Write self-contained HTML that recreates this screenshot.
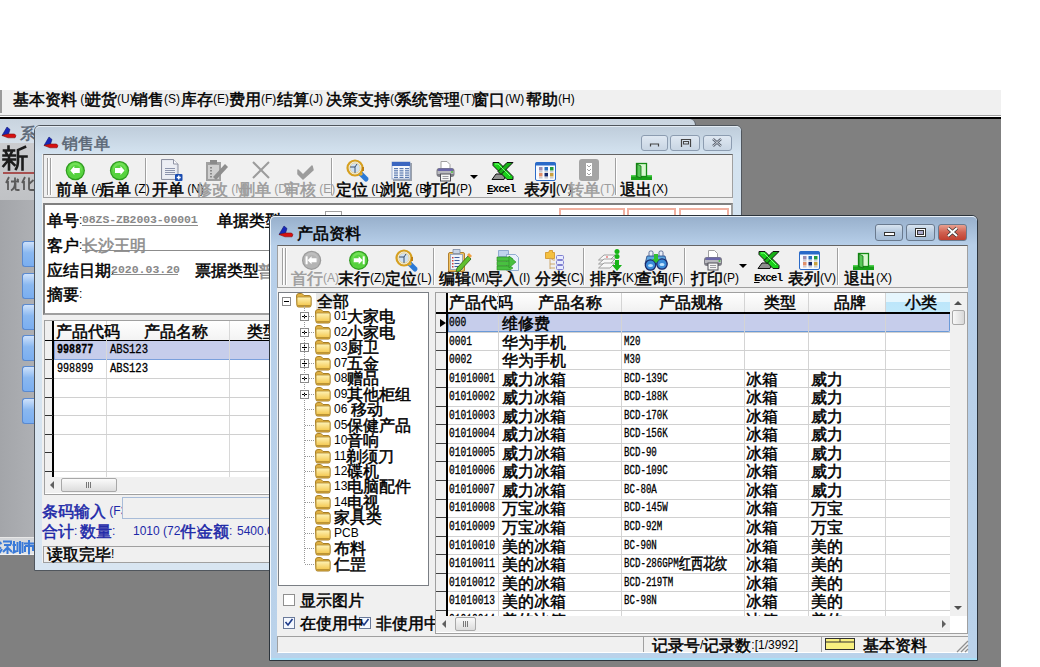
<!DOCTYPE html><html><head><meta charset="utf-8"><style>
*{box-sizing:border-box}
body{margin:0;width:1040px;height:667px;position:relative;overflow:hidden;background:#fff;font-family:"Liberation Sans",sans-serif;font-size:12px;color:#000}
div{position:absolute}
.t{white-space:nowrap;line-height:14px;height:14px}
b{font-weight:normal;font-size:16px;line-height:0;position:relative;top:2px;font-family:Liberation Sans,sans-serif;-webkit-text-stroke:0.5px}
.m{font-family:Liberation Mono,monospace;font-size:12px;transform-origin:0 50%;-webkit-text-stroke:0.3px}
.g{color:#8c8c8c}
.bl{color:#1c28a8}
</style></head><body><div style="left:0px;top:90px;width:1001px;height:25px;background:#f0f0f0"></div><div style="left:0px;top:90px;width:2px;height:23px;background:#9a9a9a"></div><div style="left:0px;top:115px;width:1001px;height:1px;background:#a0a0a0"></div><div style="left:0px;top:116px;width:1001px;height:1px;background:#fff"></div><div style="left:0px;top:117px;width:1001px;height:2px;background:#000"></div><div class="t " style="left:13px;top:92px;"><b>基本资料</b> (I)</div><div class="t " style="left:85px;top:92px;"><b>进货</b>(U)</div><div class="t " style="left:132px;top:92px;"><b>销售</b>(S)</div><div class="t " style="left:181px;top:92px;"><b>库存</b>(E)</div><div class="t " style="left:229px;top:92px;"><b>费用</b>(F)</div><div class="t " style="left:277px;top:92px;"><b>结算</b>(J)</div><div class="t " style="left:326px;top:92px;"><b>决策支持</b>(C)</div><div class="t " style="left:396px;top:92px;"><b>系统管理</b>(T)</div><div class="t " style="left:473px;top:92px;"><b>窗口</b>(W)</div><div class="t " style="left:526px;top:92px;"><b>帮助</b>(H)</div><div style="left:0px;top:119px;width:1001px;height:548px;background:#808080"></div><div style="left:0px;top:119px;width:696px;height:25px;background:linear-gradient(#c9d4df,#d6e0ea);border-radius:0 6px 0 0;border-right:1px solid #5a6068"></div><div style="left:0px;top:143px;width:40px;height:57px;background:linear-gradient(#cbcccf,#c0c2c5)"></div><div class="t " style="left:20px;top:126px;color:#5a6675"><b>系</b></div><svg width="1040" height="667" style="position:absolute;left:0;top:0"><defs><linearGradient id="fg" x1="0" y1="0" x2="0" y2="1"><stop offset="0" stop-color="#fff4b8"/><stop offset="1" stop-color="#f4c850"/></linearGradient></defs><g transform="translate(3,146)" stroke="#1c1c1c" stroke-width="2.6" fill="none" stroke-linecap="square"><path d="M5.5,0.5 v2.5 M1,4.5 h10 M3,6.5 l1,2 M8.5,6.5 l-1,2 M0.5,9.5 h11.5 M0.5,13.5 h11.5 M6,9.5 v14 M5.5,14 l-5,6 M6.5,14 l5,5"/><path d="M22,1 l-7,3 v10 q0,6 -2,9 M15,10.5 h8.5 M19.5,10.5 v13"/></g></svg><div style="left:3px;top:172px;width:38px;height:2px;background:#a85050"></div><svg width="1040" height="667" style="position:absolute;left:0;top:0"><g transform="translate(5,177)" stroke="#5a5a5a" stroke-width="1.8" fill="none"><path d="M4,0 l-3,6 M3,4 v9 M6,4.5 h8 M10,0.5 v5 q0,6 -4,8 M10.5,6 v6 q0,1 2,1 h2 M12,2 l1.5,1.5"/><path d="M20,0 l-3,6 M19,4 v9 M24,0.5 v11 q0,1.5 2,1.5 h3 M28.5,3 l-4.5,4"/></g></svg><div style="left:0px;top:200px;width:40px;height:337px;background:linear-gradient(90deg,#a3a5a9,#b0b2b6)"></div><div style="left:22px;top:241px;width:14px;height:26px;background:linear-gradient(#cfe2fb,#8ab8f0 45%,#7aaef0);border:1px solid #5a8ad0;border-right:none;border-radius:3px 0 0 3px"></div><div style="left:22px;top:273px;width:14px;height:26px;background:linear-gradient(#cfe2fb,#8ab8f0 45%,#7aaef0);border:1px solid #5a8ad0;border-right:none;border-radius:3px 0 0 3px"></div><div style="left:22px;top:304px;width:14px;height:26px;background:linear-gradient(#cfe2fb,#8ab8f0 45%,#7aaef0);border:1px solid #5a8ad0;border-right:none;border-radius:3px 0 0 3px"></div><div style="left:22px;top:335px;width:14px;height:26px;background:linear-gradient(#cfe2fb,#8ab8f0 45%,#7aaef0);border:1px solid #5a8ad0;border-right:none;border-radius:3px 0 0 3px"></div><div style="left:22px;top:366px;width:14px;height:26px;background:linear-gradient(#cfe2fb,#8ab8f0 45%,#7aaef0);border:1px solid #5a8ad0;border-right:none;border-radius:3px 0 0 3px"></div><div style="left:22px;top:398px;width:14px;height:26px;background:linear-gradient(#cfe2fb,#8ab8f0 45%,#7aaef0);border:1px solid #5a8ad0;border-right:none;border-radius:3px 0 0 3px"></div><div style="left:0px;top:537px;width:40px;height:1px;background:#e8e8e8"></div><div style="left:0px;top:538px;width:40px;height:17px;background:linear-gradient(#d4d6d9,#e4e6e8);border-bottom:1px solid #f4f4f4"></div><svg width="1040" height="667" style="position:absolute;left:0;top:0"><g transform="translate(-1,540)" stroke="#3a7ad8" stroke-width="2" fill="none"><path d="M0.5,2 l2,2 M0,7 l2,1.5 M0.5,13 l2.5,-4 M4,1.5 h8 v3 M5,5 h7 M8.5,5 v9 M8,8 l-4,4 M9,8 l4,4"/><path d="M15,1 v12 M13.5,5 h3.5 M13.5,13 l4,-2 M18.5,2 v10 M21,1 v13 M23.5,2 v11"/><path d="M30,0 v3 M25,3.5 h10 M26,6 h8 v5 M26,6 v6 M30,3.5 v11"/></g></svg><svg width="1040" height="667" style="position:absolute;left:0;top:0"><path d="M2,135.5 L7,127 L10,129.5 L8.5,134 Z" fill="#1828b8" stroke="#101870" stroke-width="0.6"/><path d="M2,135.5 L8.5,134 H14.5 Q17,135.5 15,137.8 H8 Z" fill="#d81010" stroke="#801010" stroke-width="0.6"/></svg><div style="left:34px;top:125px;width:708px;height:446px;background:#d3e1ee;border:1px solid #50565d;border-radius:6px 6px 0 0"></div><div style="left:35px;top:126px;width:706px;height:28px;background:linear-gradient(#bfcddb,#d4e3f0);border-radius:5px 5px 0 0;border-top:1px solid #e4ecf4"></div><div style="left:35px;top:154px;width:706px;height:416px;background:linear-gradient(#d4e3f0,#d8e5f1)"></div><div style="left:42px;top:154px;width:691px;height:409px;background:#f0f0f0"></div><div class="t " style="left:62px;top:136px;color:#5a6675"><b>销售单</b></div><div style="left:641px;top:135px;width:27px;height:16px;border:1px solid #8c9cb0;border-radius:3px;background:linear-gradient(#dfe8f2,#c8d5e3)"></div><div style="left:670px;top:135px;width:30px;height:16px;border:1px solid #8c9cb0;border-radius:3px;background:linear-gradient(#dfe8f2,#c8d5e3)"></div><div style="left:703px;top:135px;width:29px;height:16px;border:1px solid #8c9cb0;border-radius:3px;background:linear-gradient(#dfe8f2,#c8d5e3)"></div><svg width="1040" height="667" style="position:absolute;left:0;top:0"><path d="M650.5,146.5 v-2.5 h8 v2.5" stroke="#444" stroke-width="1.2" fill="none"/><path d="M681.5,147 v-7.5 h9 v7.5" fill="none" stroke="#444" stroke-width="1.2"/><rect x="683.5" y="141.5" width="5" height="2.5" fill="none" stroke="#444" stroke-width="1"/><path d="M713,139 l8,7 M721,139 l-8,7" stroke="#5a6270" stroke-width="2.4"/><path d="M713,139 l8,7 M721,139 l-8,7" stroke="#e8eef4" stroke-width="0.8"/></svg><div style="left:43px;top:154px;width:690px;height:44px;border:1px solid #a0a0a0;border-top-color:#646464;background:#f0f0f0"></div><div style="left:47px;top:158px;width:1px;height:37px;background:#a0a0a0"></div><div style="left:48px;top:158px;width:1px;height:37px;background:#fff"></div><div style="left:50px;top:158px;width:1px;height:37px;background:#a0a0a0"></div><div style="left:51px;top:158px;width:1px;height:37px;background:#fff"></div><div style="left:145px;top:158px;width:1px;height:37px;background:#a0a0a0"></div><div style="left:146px;top:158px;width:1px;height:37px;background:#fff"></div><div style="left:331px;top:158px;width:1px;height:37px;background:#a0a0a0"></div><div style="left:332px;top:158px;width:1px;height:37px;background:#fff"></div><div style="left:615px;top:158px;width:1px;height:37px;background:#a0a0a0"></div><div style="left:616px;top:158px;width:1px;height:37px;background:#fff"></div><div class="t " style="left:56px;top:182px;"><b>前单</b> (A)</div><div class="t " style="left:99px;top:182px;"><b>后单</b> (Z)</div><div class="t " style="left:152px;top:182px;"><b>开单</b> (N)</div><div class="t " style="left:196px;top:182px;color:#9c9c9c"><b>修改</b> (M)</div><div class="t " style="left:239px;top:182px;color:#9c9c9c"><b>删单</b> (D)</div><div class="t " style="left:284px;top:182px;color:#9c9c9c"><b>审核</b> (E)</div><div class="t " style="left:336px;top:182px;"><b>定位</b> (L)</div><div class="t " style="left:380px;top:182px;"><b>浏览</b> (B)</div><div class="t " style="left:424px;top:182px;"><b>打印</b>(P)</div><div class="t " style="left:524px;top:182px;"><b>表列</b>(V)</div><div class="t " style="left:568px;top:182px;color:#9c9c9c"><b>转单</b>(T)</div><div class="t " style="left:620px;top:182px;"><b>退出</b>(X)</div><div class="t" style="left:487px;top:182px;font-family:Liberation Mono,monospace;font-size:11px;font-weight:bold;letter-spacing:-1px"><u>E</u>xcel</div><svg width="1040" height="667" style="position:absolute;left:0;top:0"><circle cx="75.3" cy="170.6" r="9.6" fill="#2e9a1e"/><circle cx="75.3" cy="170.6" r="8.4" fill="#56d23e"/><circle cx="75.3" cy="169.1" r="6.5" fill="#8cf06e" opacity="0.5"/><circle cx="75.3" cy="170.6" r="5.6" fill="#56d23e"/><polygon points="70.3,170.6 74.3,166.1 74.3,168.1 79.8,168.1 79.8,173.1 74.3,173.1 74.3,175.1" fill="#fff"/><circle cx="119.5" cy="170.6" r="9.6" fill="#2e9a1e"/><circle cx="119.5" cy="170.6" r="8.4" fill="#56d23e"/><circle cx="119.5" cy="169.1" r="6.5" fill="#8cf06e" opacity="0.5"/><circle cx="119.5" cy="170.6" r="5.6" fill="#56d23e"/><polygon points="124.5,170.6 120.5,166.1 120.5,168.1 115.0,168.1 115.0,173.1 120.5,173.1 120.5,175.1" fill="#fff"/><path d="M161.5,159.5 h12 l4.5,4.5 v15.5 h-16.5 z" fill="#dfe2ea" stroke="#8c90a0" stroke-width="1"/><path d="M162.5,160.5 h10.5 l3.5,3.5 v14.5 h-14 z" fill="#eceef4"/><path d="M173.5,159.5 v4.5 h4.5" fill="#f8f8fc" stroke="#9094a4" stroke-width="1"/><rect x="165" y="168" width="10" height="1" fill="#8c94ac"/><rect x="165" y="170" width="10" height="1" fill="#8c94ac"/><rect x="165" y="172" width="10" height="1" fill="#8c94ac"/><rect x="165" y="174" width="10" height="1" fill="#8c94ac"/><rect x="175" y="174" width="7.5" height="7" rx="1" fill="#1a4cb0"/><path d="M178.75,175.5 v4 M176.75,177.5 h4" stroke="#fff" stroke-width="1.4"/><rect x="206" y="162" width="15" height="19" fill="#a0a0a0"/><rect x="208" y="165" width="11" height="14" fill="#d0d0d0"/><rect x="210" y="160" width="7" height="4" fill="#8a8a8a"/><path d="M213,177 l12,-13 l3,3 l-12,13 z" fill="#8e8e8e"/><rect x="210" y="167" width="2" height="1.5" fill="#8a8a8a"/><rect x="210" y="170" width="2" height="1.5" fill="#8a8a8a"/><rect x="210" y="173" width="2" height="1.5" fill="#8a8a8a"/><rect x="210" y="176" width="2" height="1.5" fill="#8a8a8a"/><path d="M253,162 L269,178 M269,162 L253,178" stroke="#9c9c9c" stroke-width="2"/><path d="M298,170 l5,5 l9,-9 l1,4 l-10,9 l-5,-5 z" fill="#9c9c9c" stroke="#9c9c9c" stroke-width="1.5" stroke-linejoin="round"/><line x1="360" y1="173" x2="366" y2="179" stroke="#2b7ad6" stroke-width="5" stroke-linecap="round"/><line x1="360" y1="173" x2="362" y2="175" stroke="#e0b040" stroke-width="3"/><circle cx="355" cy="168" r="7.5" fill="#e8eef6" stroke="#d6a020" stroke-width="2.2"/><circle cx="355" cy="168" r="5.2" fill="#cfe0f0" stroke="#f2d890" stroke-width="1"/><path d="M350,167 h5 M355,167 l2,-3 M355,167 v6" stroke="#3a4e6a" stroke-width="1"/><rect x="362" y="167" width="2" height="4" fill="#c08010"/><rect x="393" y="163" width="19" height="18" fill="#9aa0aa"/><rect x="392" y="162" width="18" height="17" fill="#f4f7fc" stroke="#8aa0c8" stroke-width="0.8"/><rect x="392" y="162" width="18" height="4" fill="#3a66c0"/><rect x="394.0" y="168.0" width="4" height="1.2" fill="#5a7ab0"/><rect x="399.5" y="168.0" width="4" height="1.2" fill="#5a7ab0"/><rect x="405.0" y="168.0" width="4" height="1.2" fill="#5a7ab0"/><rect x="394.0" y="170.2" width="4" height="1.2" fill="#5a7ab0"/><rect x="399.5" y="170.2" width="4" height="1.2" fill="#5a7ab0"/><rect x="405.0" y="170.2" width="4" height="1.2" fill="#5a7ab0"/><rect x="394.0" y="172.4" width="4" height="1.2" fill="#5a7ab0"/><rect x="399.5" y="172.4" width="4" height="1.2" fill="#5a7ab0"/><rect x="405.0" y="172.4" width="4" height="1.2" fill="#5a7ab0"/><rect x="394.0" y="174.6" width="4" height="1.2" fill="#5a7ab0"/><rect x="399.5" y="174.6" width="4" height="1.2" fill="#5a7ab0"/><rect x="405.0" y="174.6" width="4" height="1.2" fill="#5a7ab0"/><rect x="394.0" y="176.8" width="4" height="1.2" fill="#5a7ab0"/><rect x="399.5" y="176.8" width="4" height="1.2" fill="#5a7ab0"/><rect x="405.0" y="176.8" width="4" height="1.2" fill="#5a7ab0"/><path d="M441,161.5 h6 l3,3 v5 h-9 z" fill="#fff" stroke="#a0a0a0" stroke-width="1"/><rect x="436.5" y="168" width="18" height="9" rx="3" fill="#7c7c84"/><rect x="438" y="168.5" width="15" height="2.5" rx="1" fill="#6a66a8"/><rect x="437.5" y="171" width="16" height="3" fill="#b8b8be"/><rect x="440.5" y="174" width="10" height="7" fill="#f4f4f4" stroke="#505058" stroke-width="1"/><path d="M442.5,176.5 h6 M442.5,178.5 h6" stroke="#9a9aa0" stroke-width="1"/><circle cx="452" cy="172" r="1" fill="#50c040"/><polygon points="470,175 478,175 474,179" fill="#000"/><polygon points="492,179.5 496,174 506,174 504,179.5" fill="#909090" stroke="#101010" stroke-width="1"/><path d="M493,162.5 h6 l14,14 v3 h-6 l-14,-14 z" fill="#19d019" stroke="#101010" stroke-width="1"/><path d="M513,162.5 h-6 l-9,9 l3,3 z" fill="#17b017" stroke="#101010" stroke-width="1"/><path d="M495,164 h3 l12,12" stroke="#7cff7c" stroke-width="1" fill="none"/><rect x="535.5" y="162.5" width="20" height="18" rx="1.5" fill="#f8fbff" stroke="#2a6ac8" stroke-width="1"/><rect x="535.5" y="162.5" width="20" height="3" fill="#2a6ac8"/><rect x="539.0" y="167" width="3.5" height="3.5" fill="#9c8cb0"/><rect x="539.0" y="171.5" width="3.5" height="0.8" fill="#a0a0a0"/><rect x="544.5" y="167" width="3.5" height="3.5" fill="#2a70c0"/><rect x="544.5" y="171.5" width="3.5" height="0.8" fill="#a0a0a0"/><rect x="550.0" y="167" width="3.5" height="3.5" fill="#239a3a"/><rect x="550.0" y="171.5" width="3.5" height="0.8" fill="#a0a0a0"/><rect x="539.0" y="173" width="3.5" height="3.5" fill="#e0906a"/><rect x="539.0" y="177.5" width="3.5" height="0.8" fill="#a0a0a0"/><rect x="544.5" y="173" width="3.5" height="3.5" fill="#14286a"/><rect x="544.5" y="177.5" width="3.5" height="0.8" fill="#a0a0a0"/><rect x="550.0" y="173" width="3.5" height="3.5" fill="#c8a040"/><rect x="550.0" y="177.5" width="3.5" height="0.8" fill="#a0a0a0"/><rect x="579" y="159" width="20" height="22" rx="3" fill="#a4a4a4"/><path d="M586,163 h6 v13 h-6 z" fill="#fff"/><path d="M587,165 l2,2 l2,-2 M587,169 l2,2 l2,-2 M587,173 l2,2 l2,-2" stroke="#a4a4a4" stroke-width="1" fill="none"/><rect x="631" y="175" width="21" height="5" fill="#18a018"/><rect x="631" y="175" width="21" height="1.5" fill="#50d050"/><rect x="636.5" y="163.5" width="10" height="13" fill="#d8f8d0" stroke="#138a13" stroke-width="1.3"/><path d="M637,164 l4,2 v12 l-4,-1.5 z" fill="#58c858" stroke="#107010" stroke-width="0.8"/><path d="M44,145.5 L49,137 L52,139.5 L50.5,144 Z" fill="#1828b8" stroke="#101870" stroke-width="0.6"/><path d="M44,145.5 L50.5,144 H56.5 Q59,145.5 57,147.8 H50 Z" fill="#d81010" stroke="#801010" stroke-width="0.6"/></svg><div style="left:43px;top:203px;width:690px;height:112px;border:2px solid #808080;border-right-color:#a0a0a0;border-bottom-color:#a0a0a0;background:#fff"></div><div class="t " style="left:47px;top:213px;"><b>单号</b>:</div><div class="t " style="left:82px;top:213px;font-family:Liberation Mono,monospace;font-size:11.5px;color:#888;letter-spacing:-0.1px;font-weight:bold">08ZS-ZB2003-00001</div><div style="left:82px;top:225px;width:116px;height:1px;background:#8c8c8c"></div><div class="t " style="left:217px;top:213px;"><b>单据类型</b>:</div><div style="left:559px;top:208px;width:66px;height:8px;border:2px solid #f0b0a0;border-bottom:none"></div><div style="left:627px;top:208px;width:49px;height:8px;border:2px solid #f0b0a0;border-bottom:none"></div><div style="left:679px;top:208px;width:50px;height:8px;border:2px solid #f0b0a0;border-bottom:none"></div><div style="left:325px;top:211px;width:17px;height:6px;background:#fff;border:1px solid #a0a0a0"></div><div class="t " style="left:47px;top:238px;"><b>客户</b>:</div><div class="t " style="left:82px;top:238px;color:#8c8c8c"><b>长沙王明</b></div><div style="left:82px;top:250px;width:200px;height:1px;background:#8c8c8c"></div><div class="t " style="left:47px;top:263px;"><b>应结日期</b>:</div><div class="t " style="left:111px;top:263px;font-family:Liberation Mono,monospace;font-size:11.5px;color:#888;font-weight:bold">2020.03.20</div><div style="left:111px;top:274px;width:67px;height:1px;background:#8c8c8c"></div><div class="t " style="left:195px;top:263px;"><b>票据类型</b>:</div><div class="t " style="left:258px;top:264px;color:#8c8c8c"><b>普</b></div><div class="t " style="left:47px;top:287px;"><b>摘要</b>:</div><div style="left:44px;top:320px;width:689px;height:175px;background:#fff;border:1px solid #a0a0a0"></div><div style="left:45px;top:321px;width:8px;height:156px;background:#f0f0f0"></div><div style="left:52px;top:321px;width:2px;height:156px;background:#000"></div><div style="left:54px;top:321px;width:679px;height:20px;background:linear-gradient(#ffffff,#f2f2f2)"></div><div style="left:45px;top:340px;width:688px;height:1px;background:#000"></div><div style="left:54px;top:341px;width:679px;height:19px;background:#c6cdeb;border-bottom:1px solid #7aa0dc;border-left:1px solid #7aa0dc"></div><div style="left:106px;top:321px;width:1px;height:156px;background:#d8d8d8"></div><div style="left:229px;top:321px;width:1px;height:156px;background:#d8d8d8"></div><div style="left:54px;top:378px;width:679px;height:1px;background:#d0d0d0"></div><div style="left:54px;top:397px;width:679px;height:1px;background:#d0d0d0"></div><div style="left:54px;top:415px;width:679px;height:1px;background:#d0d0d0"></div><div style="left:54px;top:434px;width:679px;height:1px;background:#d0d0d0"></div><div style="left:54px;top:471px;width:679px;height:1px;background:#d0d0d0"></div><div style="left:45px;top:359px;width:8px;height:1px;background:#303030"></div><div style="left:45px;top:378px;width:8px;height:1px;background:#303030"></div><div style="left:45px;top:397px;width:8px;height:1px;background:#303030"></div><div style="left:45px;top:415px;width:8px;height:1px;background:#303030"></div><div style="left:45px;top:434px;width:8px;height:1px;background:#303030"></div><div style="left:45px;top:452px;width:8px;height:1px;background:#303030"></div><div style="left:45px;top:471px;width:8px;height:1px;background:#303030"></div><div class="t " style="left:56px;top:324px;"><b>产品代码</b></div><div class="t " style="left:144px;top:324px;"><b>产品名称</b></div><div class="t " style="left:247px;top:324px;"><b>类型</b></div><div class="t m" style="left:57px;top:343px;font-weight:bold;transform:scaleX(0.84)">998877</div><div class="t m" style="left:110px;top:343px;transform:scaleX(0.88)">ABS123</div><div class="t m" style="left:57px;top:362px;transform:scaleX(0.84)">998899</div><div class="t m" style="left:110px;top:362px;transform:scaleX(0.88)">ABS123</div><div style="left:45px;top:477px;width:688px;height:16px;background:#f0f0f0"></div><div style="left:61px;top:478px;width:56px;height:14px;border:1px solid #a8a8a8;border-radius:2px;background:linear-gradient(#fafafa,#dcdcdc)"></div><svg width="1040" height="667" style="position:absolute;left:0;top:0"><polygon points="50,485 54,481 54,489" fill="#606060"/><path d="M86.5,482 v6 M88.5,482 v6 M90.5,482 v6" stroke="#777" stroke-width="1"/></svg><div class="t " style="left:42px;top:504px;color:#1c28a8"><b>条码输入</b> (F3):</div><div style="left:122px;top:497px;width:611px;height:22px;border:1px solid #a8bcd8;background:#f0f0f0"></div><div class="t " style="left:42px;top:524px;color:#1c28a8"><b>合计</b>:</div><div class="t " style="left:80px;top:524px;color:#1c28a8"><b>数量</b>:</div><div class="t " style="left:133px;top:524px;color:#1c28a8">1010 (72<b>件</b>)</div><div class="t " style="left:197px;top:524px;color:#1c28a8"><b>金额</b>:</div><div class="t " style="left:237px;top:524px;color:#1c28a8">5400.0</div><div style="left:43px;top:546px;width:690px;height:17px;border:1px solid #a0a0a0;background:#f0f0f0"></div><div class="t " style="left:47px;top:547px;"><b>读取完毕</b>!</div><div style="left:269px;top:215px;width:709px;height:446px;background:#b9d1ea;border:1px solid #2c343c;border-radius:6px 6px 0 0"></div><div style="left:270px;top:216px;width:707px;height:29px;background:linear-gradient(#98b0cc,#b7cfe9);border-radius:5px 5px 0 0;border-top:1px solid #e8f0f8;border-left:1px solid #e8f0f8"></div><div style="left:270px;top:245px;width:707px;height:415px;background:linear-gradient(#b7cfe9,#bad2ea);border-left:1px solid #f0f6fc"></div><div style="left:271px;top:658px;width:706px;height:2px;background:#a8e0f8"></div><div style="left:277px;top:245px;width:691px;height:407px;background:#f0f0f0"></div><div class="t " style="left:297px;top:226px;"><b>产品资料</b></div><div style="left:875px;top:224px;width:28px;height:17px;border:1px solid #6a7a8e;border-radius:3px;background:linear-gradient(#d8e4f0,#b4c8de 50%,#a4bcd6)"></div><div style="left:906px;top:224px;width:29px;height:17px;border:1px solid #6a7a8e;border-radius:3px;background:linear-gradient(#d8e4f0,#b4c8de 50%,#a4bcd6)"></div><div style="left:938px;top:224px;width:29px;height:17px;border:1px solid #6a7a8e;border-radius:3px;background:linear-gradient(#e8a090,#d06050 50%,#c04030)"></div><svg width="1040" height="667" style="position:absolute;left:0;top:0"><rect x="884.5" y="232.5" width="10" height="3" fill="#fff" stroke="#333" stroke-width="1"/><rect x="915.5" y="228.5" width="10" height="8" fill="#fff" stroke="#333" stroke-width="1"/><rect x="917.5" y="230.5" width="6" height="4" fill="#aac" stroke="#333" stroke-width="1"/><path d="M948,228 l9,8 M957,228 l-9,8" stroke="#333" stroke-width="3.4"/><path d="M948,228 l9,8 M957,228 l-9,8" stroke="#fff" stroke-width="2"/></svg><div style="left:277px;top:245px;width:691px;height:43px;border:1px solid #a0a0a0;border-top-color:#646464;background:#f0f0f0"></div><div style="left:282px;top:248px;width:1px;height:37px;background:#a0a0a0"></div><div style="left:283px;top:248px;width:1px;height:37px;background:#fff"></div><div style="left:285px;top:248px;width:1px;height:37px;background:#a0a0a0"></div><div style="left:286px;top:248px;width:1px;height:37px;background:#fff"></div><div style="left:433px;top:248px;width:1px;height:37px;background:#a0a0a0"></div><div style="left:434px;top:248px;width:1px;height:37px;background:#fff"></div><div style="left:583px;top:248px;width:1px;height:37px;background:#a0a0a0"></div><div style="left:584px;top:248px;width:1px;height:37px;background:#fff"></div><div style="left:684px;top:248px;width:1px;height:37px;background:#a0a0a0"></div><div style="left:685px;top:248px;width:1px;height:37px;background:#fff"></div><div style="left:837px;top:248px;width:1px;height:37px;background:#a0a0a0"></div><div style="left:838px;top:248px;width:1px;height:37px;background:#fff"></div><div class="t " style="left:291px;top:271px;color:#9c9c9c"><b>首行</b>(A)</div><div class="t " style="left:338px;top:271px;"><b>末行</b>(Z)</div><div class="t " style="left:385px;top:271px;"><b>定位</b>(L)</div><div class="t " style="left:439px;top:271px;"><b>编辑</b>(M)</div><div class="t " style="left:487px;top:271px;"><b>导入</b>(I)</div><div class="t " style="left:535px;top:271px;"><b>分类</b>(C)</div><div class="t " style="left:590px;top:271px;"><b>排序</b>(K)</div><div class="t " style="left:636px;top:271px;"><b>查询</b>(F)</div><div class="t " style="left:691px;top:271px;"><b>打印</b>(P)</div><div class="t " style="left:788px;top:271px;"><b>表列</b>(V)</div><div class="t " style="left:844px;top:271px;"><b>退出</b>(X)</div><div class="t" style="left:754px;top:271px;font-family:Liberation Mono,monospace;font-size:11px;font-weight:bold;letter-spacing:-1px"><u>E</u>xcel</div><svg width="1040" height="667" style="position:absolute;left:0;top:0"><circle cx="311.6" cy="260.3" r="9.6" fill="#9a9a9a"/><circle cx="311.6" cy="260.3" r="8.4" fill="#b4b4b4"/><circle cx="311.6" cy="258.8" r="6.5" fill="#c8c8c8" opacity="0.5"/><circle cx="311.6" cy="260.3" r="5.6" fill="#b4b4b4"/><rect x="305.6" y="256.3" width="2" height="8" fill="#fff"/><polygon points="307.6,260.3 311.6,256.3 311.6,258.3 316.6,258.3 316.6,262.3 311.6,262.3 311.6,264.3" fill="#fff"/><circle cx="358.7" cy="260.3" r="9.6" fill="#2e9a1e"/><circle cx="358.7" cy="260.3" r="8.4" fill="#56d23e"/><circle cx="358.7" cy="258.8" r="6.5" fill="#8cf06e" opacity="0.5"/><circle cx="358.7" cy="260.3" r="5.6" fill="#56d23e"/><rect x="362.7" y="256.3" width="2" height="8" fill="#fff"/><polygon points="362.7,260.3 358.7,256.3 358.7,258.3 353.7,258.3 353.7,262.3 358.7,262.3 358.7,264.3" fill="#fff"/><line x1="409" y1="263" x2="415" y2="269" stroke="#2b7ad6" stroke-width="5" stroke-linecap="round"/><line x1="409" y1="263" x2="411" y2="265" stroke="#e0b040" stroke-width="3"/><circle cx="404" cy="258" r="7.5" fill="#e8eef6" stroke="#d6a020" stroke-width="2.2"/><circle cx="404" cy="258" r="5.2" fill="#cfe0f0" stroke="#f2d890" stroke-width="1"/><path d="M399,257 h5 M404,257 l2,-3 M404,257 v6" stroke="#3a4e6a" stroke-width="1"/><rect x="411" y="257" width="2" height="4" fill="#c08010"/><rect x="448.5" y="252.5" width="16" height="19" rx="1.5" fill="#f0c060" stroke="#b08030" stroke-width="1"/><rect x="450.5" y="254.5" width="12" height="15" fill="#eef4fb" stroke="#8ca0c0" stroke-width="0.8"/><path d="M453,249.5 h7 v4 h-7 z" fill="#c8d4e4" stroke="#7a8aa4" stroke-width="0.8"/><rect x="452" y="257" width="1.5" height="1.5" fill="#d04040"/><rect x="454.5" y="257" width="5" height="1" fill="#4060a0"/><rect x="452" y="260" width="1.5" height="1.5" fill="#d04040"/><rect x="454.5" y="260" width="5" height="1" fill="#4060a0"/><rect x="452" y="263" width="1.5" height="1.5" fill="#d04040"/><rect x="454.5" y="263" width="5" height="1" fill="#4060a0"/><rect x="452" y="266" width="1.5" height="1.5" fill="#d04040"/><rect x="454.5" y="266" width="5" height="1" fill="#4060a0"/><path d="M457,268 l11,-12 l3,3 l-11,12 l-4,1 z" fill="#60c030" stroke="#306010" stroke-width="0.8"/><path d="M467,255 l2,-2 l3,3 l-2,2 z" fill="#f0a040"/><path d="M498.5,250.5 h10 l0,0 v6 h-10 z" fill="#c0d4ec" stroke="#7c9cc8" stroke-width="0.8"/><path d="M506.5,254.5 h9 l3,3 v13 h-12 z" fill="#e8f0fa" stroke="#7c9cc8" stroke-width="0.8"/><path d="M497,257.0 h13 l3,2 l-3,2 h-13 z" fill="#48c040" stroke="#2a8a20" stroke-width="0.6"/><path d="M497,261.5 h13 l3,2 l-3,2 h-13 z" fill="#48c040" stroke="#2a8a20" stroke-width="0.6"/><path d="M497,266.0 h13 l3,2 l-3,2 h-13 z" fill="#48c040" stroke="#2a8a20" stroke-width="0.6"/><polygon points="509,256 516,262 509,268" fill="#48c040" stroke="#2a8a20" stroke-width="0.6"/><path d="M545.5,252.5 h3 l1,-2 h3 v2 h2 v6 h-9 z" fill="#f4c040" stroke="#d09020" stroke-width="0.8"/><path d="M550,258 v11 M550,258 l3,2 h2 M550,264 h5 M550,268 h5" stroke="#c8a060" stroke-width="0.9" fill="none"/><rect x="556.5" y="255.5" width="7" height="4" rx="1" fill="#e8ecff" stroke="#8080d0" stroke-width="1"/><rect x="556.5" y="260.5" width="7" height="4" rx="1" fill="#e8ecff" stroke="#8080d0" stroke-width="1"/><rect x="556.5" y="265.5" width="7" height="4" rx="1" fill="#e8ecff" stroke="#8080d0" stroke-width="1"/><polygon points="598.5,260 604,255 615,255 610,260" fill="#f8f8f8" stroke="#8a8a8a" stroke-width="0.8"/><polygon points="598.5,264 604,259 615,259 610,264" fill="#f8f8f8" stroke="#8a8a8a" stroke-width="0.8"/><polygon points="598.5,268 604,263 615,263 610,268" fill="#f8f8f8" stroke="#8a8a8a" stroke-width="0.8"/><rect x="606" y="256.5" width="2" height="1" fill="#e04040"/><circle cx="617" cy="251.5" r="2.5" fill="#18b418"/><circle cx="617" cy="256.5" r="2.5" fill="#18b418"/><polygon points="615,260 619,260 619,265 622,265 617,271 612,265 615,265" fill="#18b418"/><rect x="649" y="251" width="4" height="6" rx="1.5" fill="#e8eef8" stroke="#405080" stroke-width="0.8"/><rect x="659" y="251" width="4" height="6" rx="1.5" fill="#e8eef8" stroke="#405080" stroke-width="0.8"/><path d="M647,256 h18 l2,8 h-22 z" fill="#60a8e0" stroke="#204080" stroke-width="0.8"/><circle cx="650.5" cy="265" r="5.2" fill="#3a8ad8" stroke="#1a2a6a" stroke-width="1.3"/><circle cx="662" cy="264" r="5.2" fill="#3a8ad8" stroke="#1a2a6a" stroke-width="1.3"/><ellipse cx="650.5" cy="265.5" rx="2.5" ry="1.5" fill="#c0e4ff"/><ellipse cx="662" cy="264.5" rx="2.5" ry="1.5" fill="#c0e4ff"/><polygon points="654,254 658,254 658,259 660,259 656,263 652,259 654,259" fill="#30c030"/><path d="M708.5,250.5 h6 l3,3 v5 h-9 z" fill="#fff" stroke="#a0a0a0" stroke-width="1"/><rect x="704.0" y="257" width="18" height="9" rx="3" fill="#7c7c84"/><rect x="705.5" y="257.5" width="15" height="2.5" rx="1" fill="#6a66a8"/><rect x="705.0" y="260" width="16" height="3" fill="#b8b8be"/><rect x="708.0" y="263" width="10" height="7" fill="#f4f4f4" stroke="#505058" stroke-width="1"/><path d="M710.0,265.5 h6 M710.0,267.5 h6" stroke="#9a9aa0" stroke-width="1"/><circle cx="719.5" cy="261" r="1" fill="#50c040"/><polygon points="739,264 747,264 743,268" fill="#000"/><polygon points="758,268.5 762,263 772,263 770,268.5" fill="#909090" stroke="#101010" stroke-width="1"/><path d="M759,251.5 h6 l14,14 v3 h-6 l-14,-14 z" fill="#19d019" stroke="#101010" stroke-width="1"/><path d="M779,251.5 h-6 l-9,9 l3,3 z" fill="#17b017" stroke="#101010" stroke-width="1"/><path d="M761,253 h3 l12,12" stroke="#7cff7c" stroke-width="1" fill="none"/><rect x="799.5" y="251.5" width="20" height="18" rx="1.5" fill="#f8fbff" stroke="#2a6ac8" stroke-width="1"/><rect x="799.5" y="251.5" width="20" height="3" fill="#2a6ac8"/><rect x="803.0" y="256" width="3.5" height="3.5" fill="#9c8cb0"/><rect x="803.0" y="260.5" width="3.5" height="0.8" fill="#a0a0a0"/><rect x="808.5" y="256" width="3.5" height="3.5" fill="#2a70c0"/><rect x="808.5" y="260.5" width="3.5" height="0.8" fill="#a0a0a0"/><rect x="814.0" y="256" width="3.5" height="3.5" fill="#239a3a"/><rect x="814.0" y="260.5" width="3.5" height="0.8" fill="#a0a0a0"/><rect x="803.0" y="262" width="3.5" height="3.5" fill="#e0906a"/><rect x="803.0" y="266.5" width="3.5" height="0.8" fill="#a0a0a0"/><rect x="808.5" y="262" width="3.5" height="3.5" fill="#14286a"/><rect x="808.5" y="266.5" width="3.5" height="0.8" fill="#a0a0a0"/><rect x="814.0" y="262" width="3.5" height="3.5" fill="#c8a040"/><rect x="814.0" y="266.5" width="3.5" height="0.8" fill="#a0a0a0"/><rect x="853" y="265" width="21" height="5" fill="#18a018"/><rect x="853" y="265" width="21" height="1.5" fill="#50d050"/><rect x="858.5" y="253.5" width="10" height="13" fill="#d8f8d0" stroke="#138a13" stroke-width="1.3"/><path d="M859,254 l4,2 v12 l-4,-1.5 z" fill="#58c858" stroke="#107010" stroke-width="0.8"/><path d="M279,234.5 L284,226 L287,228.5 L285.5,233 Z" fill="#1828b8" stroke="#101870" stroke-width="0.6"/><path d="M279,234.5 L285.5,233 H291.5 Q294,234.5 292,236.8 H285 Z" fill="#d81010" stroke="#801010" stroke-width="0.6"/></svg><div style="left:278px;top:292px;width:151px;height:294px;border:1px solid #7a7e84;background:#fff"></div><div style="left:316px;top:293px;width:25px;height:16px;background:#e8e8e8"></div><div class="t " style="left:317px;top:294px;"><b>全部</b></div><div class="t " style="left:334px;top:309px;">01<b>大家电</b></div><div class="t " style="left:334px;top:325px;">02<b>小家电</b></div><div class="t " style="left:334px;top:340px;">03<b>厨卫</b></div><div class="t " style="left:334px;top:356px;">07<b>五金</b></div><div class="t " style="left:334px;top:371px;">08<b>赠品</b></div><div class="t " style="left:334px;top:387px;">09<b>其他柜组</b></div><div class="t " style="left:334px;top:402px;">06 <b>移动</b></div><div class="t " style="left:334px;top:418px;">05<b>保健产品</b></div><div class="t " style="left:334px;top:433px;">10<b>音响</b></div><div class="t " style="left:334px;top:449px;">11<b>剃须刀</b></div><div class="t " style="left:334px;top:464px;">12<b>碟机</b></div><div class="t " style="left:334px;top:479px;">13<b>电脑配件</b></div><div class="t " style="left:334px;top:495px;">14<b>电视</b></div><div class="t " style="left:334px;top:510px;"><b>家具类</b></div><div class="t " style="left:334px;top:526px;">PCB</div><div class="t " style="left:334px;top:541px;"><b>布料</b></div><div class="t " style="left:334px;top:557px;"><b>仁罡</b></div><svg width="1040" height="667" style="position:absolute;left:0;top:0"><rect x="282.5" y="297.5" width="8" height="8" fill="#fff" stroke="#8a8a8a" stroke-width="1"/><rect x="284" y="301" width="5" height="1" fill="#000"/><path d="M296.5,296 q0,-2.5 2.5,-2.5 h2.5 q1,0 2,1.5 l0.5,0.5 h5 q2,0 2,2 v8 q0,1.5 -1.5,1.5 h-11 q-1.5,0 -1.5,-1.5 z" fill="#e0b040" stroke="#a88028" stroke-width="1"/><path d="M297,298 q0,-1 1,-1 h12 q1,0 1,1 v6.5 q0,1 -1,1 h-12 q-1,0 -1,-1 z" fill="url(#fg)" stroke="#b08a30" stroke-width="0.8"/><rect x="300.5" y="312.5" width="8" height="8" fill="#fff" stroke="#8a8a8a" stroke-width="1"/><rect x="302" y="316" width="5" height="1" fill="#000"/><rect x="304" y="314" width="1" height="5" fill="#000"/><path d="M309,316.5 h6" stroke="#999" stroke-width="1" stroke-dasharray="1,1"/><path d="M315.5,312 q0,-2.5 2.5,-2.5 h2.5 q1,0 2,1.5 l0.5,0.5 h5 q2,0 2,2 v8 q0,1.5 -1.5,1.5 h-11 q-1.5,0 -1.5,-1.5 z" fill="#e0b040" stroke="#a88028" stroke-width="1"/><path d="M316,314 q0,-1 1,-1 h12 q1,0 1,1 v6.5 q0,1 -1,1 h-12 q-1,0 -1,-1 z" fill="url(#fg)" stroke="#b08a30" stroke-width="0.8"/><rect x="300.5" y="328.5" width="8" height="8" fill="#fff" stroke="#8a8a8a" stroke-width="1"/><rect x="302" y="332" width="5" height="1" fill="#000"/><rect x="304" y="330" width="1" height="5" fill="#000"/><path d="M309,332.5 h6" stroke="#999" stroke-width="1" stroke-dasharray="1,1"/><path d="M315.5,328 q0,-2.5 2.5,-2.5 h2.5 q1,0 2,1.5 l0.5,0.5 h5 q2,0 2,2 v8 q0,1.5 -1.5,1.5 h-11 q-1.5,0 -1.5,-1.5 z" fill="#e0b040" stroke="#a88028" stroke-width="1"/><path d="M316,330 q0,-1 1,-1 h12 q1,0 1,1 v6.5 q0,1 -1,1 h-12 q-1,0 -1,-1 z" fill="url(#fg)" stroke="#b08a30" stroke-width="0.8"/><rect x="300.5" y="343.5" width="8" height="8" fill="#fff" stroke="#8a8a8a" stroke-width="1"/><rect x="302" y="347" width="5" height="1" fill="#000"/><rect x="304" y="345" width="1" height="5" fill="#000"/><path d="M309,347.5 h6" stroke="#999" stroke-width="1" stroke-dasharray="1,1"/><path d="M315.5,343 q0,-2.5 2.5,-2.5 h2.5 q1,0 2,1.5 l0.5,0.5 h5 q2,0 2,2 v8 q0,1.5 -1.5,1.5 h-11 q-1.5,0 -1.5,-1.5 z" fill="#e0b040" stroke="#a88028" stroke-width="1"/><path d="M316,345 q0,-1 1,-1 h12 q1,0 1,1 v6.5 q0,1 -1,1 h-12 q-1,0 -1,-1 z" fill="url(#fg)" stroke="#b08a30" stroke-width="0.8"/><rect x="300.5" y="359.5" width="8" height="8" fill="#fff" stroke="#8a8a8a" stroke-width="1"/><rect x="302" y="363" width="5" height="1" fill="#000"/><rect x="304" y="361" width="1" height="5" fill="#000"/><path d="M309,363.5 h6" stroke="#999" stroke-width="1" stroke-dasharray="1,1"/><path d="M315.5,359 q0,-2.5 2.5,-2.5 h2.5 q1,0 2,1.5 l0.5,0.5 h5 q2,0 2,2 v8 q0,1.5 -1.5,1.5 h-11 q-1.5,0 -1.5,-1.5 z" fill="#e0b040" stroke="#a88028" stroke-width="1"/><path d="M316,361 q0,-1 1,-1 h12 q1,0 1,1 v6.5 q0,1 -1,1 h-12 q-1,0 -1,-1 z" fill="url(#fg)" stroke="#b08a30" stroke-width="0.8"/><rect x="300.5" y="374.5" width="8" height="8" fill="#fff" stroke="#8a8a8a" stroke-width="1"/><rect x="302" y="378" width="5" height="1" fill="#000"/><rect x="304" y="376" width="1" height="5" fill="#000"/><path d="M309,378.5 h6" stroke="#999" stroke-width="1" stroke-dasharray="1,1"/><path d="M315.5,374 q0,-2.5 2.5,-2.5 h2.5 q1,0 2,1.5 l0.5,0.5 h5 q2,0 2,2 v8 q0,1.5 -1.5,1.5 h-11 q-1.5,0 -1.5,-1.5 z" fill="#e0b040" stroke="#a88028" stroke-width="1"/><path d="M316,376 q0,-1 1,-1 h12 q1,0 1,1 v6.5 q0,1 -1,1 h-12 q-1,0 -1,-1 z" fill="url(#fg)" stroke="#b08a30" stroke-width="0.8"/><rect x="300.5" y="390.5" width="8" height="8" fill="#fff" stroke="#8a8a8a" stroke-width="1"/><rect x="302" y="394" width="5" height="1" fill="#000"/><rect x="304" y="392" width="1" height="5" fill="#000"/><path d="M309,394.5 h6" stroke="#999" stroke-width="1" stroke-dasharray="1,1"/><path d="M315.5,390 q0,-2.5 2.5,-2.5 h2.5 q1,0 2,1.5 l0.5,0.5 h5 q2,0 2,2 v8 q0,1.5 -1.5,1.5 h-11 q-1.5,0 -1.5,-1.5 z" fill="#e0b040" stroke="#a88028" stroke-width="1"/><path d="M316,392 q0,-1 1,-1 h12 q1,0 1,1 v6.5 q0,1 -1,1 h-12 q-1,0 -1,-1 z" fill="url(#fg)" stroke="#b08a30" stroke-width="0.8"/><path d="M305,409.5 h10" stroke="#999" stroke-width="1" stroke-dasharray="1,1"/><path d="M315.5,405 q0,-2.5 2.5,-2.5 h2.5 q1,0 2,1.5 l0.5,0.5 h5 q2,0 2,2 v8 q0,1.5 -1.5,1.5 h-11 q-1.5,0 -1.5,-1.5 z" fill="#e0b040" stroke="#a88028" stroke-width="1"/><path d="M316,407 q0,-1 1,-1 h12 q1,0 1,1 v6.5 q0,1 -1,1 h-12 q-1,0 -1,-1 z" fill="url(#fg)" stroke="#b08a30" stroke-width="0.8"/><path d="M305,425.5 h10" stroke="#999" stroke-width="1" stroke-dasharray="1,1"/><path d="M315.5,421 q0,-2.5 2.5,-2.5 h2.5 q1,0 2,1.5 l0.5,0.5 h5 q2,0 2,2 v8 q0,1.5 -1.5,1.5 h-11 q-1.5,0 -1.5,-1.5 z" fill="#e0b040" stroke="#a88028" stroke-width="1"/><path d="M316,423 q0,-1 1,-1 h12 q1,0 1,1 v6.5 q0,1 -1,1 h-12 q-1,0 -1,-1 z" fill="url(#fg)" stroke="#b08a30" stroke-width="0.8"/><path d="M305,440.5 h10" stroke="#999" stroke-width="1" stroke-dasharray="1,1"/><path d="M315.5,436 q0,-2.5 2.5,-2.5 h2.5 q1,0 2,1.5 l0.5,0.5 h5 q2,0 2,2 v8 q0,1.5 -1.5,1.5 h-11 q-1.5,0 -1.5,-1.5 z" fill="#e0b040" stroke="#a88028" stroke-width="1"/><path d="M316,438 q0,-1 1,-1 h12 q1,0 1,1 v6.5 q0,1 -1,1 h-12 q-1,0 -1,-1 z" fill="url(#fg)" stroke="#b08a30" stroke-width="0.8"/><path d="M305,456.5 h10" stroke="#999" stroke-width="1" stroke-dasharray="1,1"/><path d="M315.5,452 q0,-2.5 2.5,-2.5 h2.5 q1,0 2,1.5 l0.5,0.5 h5 q2,0 2,2 v8 q0,1.5 -1.5,1.5 h-11 q-1.5,0 -1.5,-1.5 z" fill="#e0b040" stroke="#a88028" stroke-width="1"/><path d="M316,454 q0,-1 1,-1 h12 q1,0 1,1 v6.5 q0,1 -1,1 h-12 q-1,0 -1,-1 z" fill="url(#fg)" stroke="#b08a30" stroke-width="0.8"/><path d="M305,471.5 h10" stroke="#999" stroke-width="1" stroke-dasharray="1,1"/><path d="M315.5,467 q0,-2.5 2.5,-2.5 h2.5 q1,0 2,1.5 l0.5,0.5 h5 q2,0 2,2 v8 q0,1.5 -1.5,1.5 h-11 q-1.5,0 -1.5,-1.5 z" fill="#e0b040" stroke="#a88028" stroke-width="1"/><path d="M316,469 q0,-1 1,-1 h12 q1,0 1,1 v6.5 q0,1 -1,1 h-12 q-1,0 -1,-1 z" fill="url(#fg)" stroke="#b08a30" stroke-width="0.8"/><path d="M305,486.5 h10" stroke="#999" stroke-width="1" stroke-dasharray="1,1"/><path d="M315.5,482 q0,-2.5 2.5,-2.5 h2.5 q1,0 2,1.5 l0.5,0.5 h5 q2,0 2,2 v8 q0,1.5 -1.5,1.5 h-11 q-1.5,0 -1.5,-1.5 z" fill="#e0b040" stroke="#a88028" stroke-width="1"/><path d="M316,484 q0,-1 1,-1 h12 q1,0 1,1 v6.5 q0,1 -1,1 h-12 q-1,0 -1,-1 z" fill="url(#fg)" stroke="#b08a30" stroke-width="0.8"/><path d="M305,502.5 h10" stroke="#999" stroke-width="1" stroke-dasharray="1,1"/><path d="M315.5,498 q0,-2.5 2.5,-2.5 h2.5 q1,0 2,1.5 l0.5,0.5 h5 q2,0 2,2 v8 q0,1.5 -1.5,1.5 h-11 q-1.5,0 -1.5,-1.5 z" fill="#e0b040" stroke="#a88028" stroke-width="1"/><path d="M316,500 q0,-1 1,-1 h12 q1,0 1,1 v6.5 q0,1 -1,1 h-12 q-1,0 -1,-1 z" fill="url(#fg)" stroke="#b08a30" stroke-width="0.8"/><path d="M305,517.5 h10" stroke="#999" stroke-width="1" stroke-dasharray="1,1"/><path d="M315.5,513 q0,-2.5 2.5,-2.5 h2.5 q1,0 2,1.5 l0.5,0.5 h5 q2,0 2,2 v8 q0,1.5 -1.5,1.5 h-11 q-1.5,0 -1.5,-1.5 z" fill="#e0b040" stroke="#a88028" stroke-width="1"/><path d="M316,515 q0,-1 1,-1 h12 q1,0 1,1 v6.5 q0,1 -1,1 h-12 q-1,0 -1,-1 z" fill="url(#fg)" stroke="#b08a30" stroke-width="0.8"/><path d="M305,533.5 h10" stroke="#999" stroke-width="1" stroke-dasharray="1,1"/><path d="M315.5,529 q0,-2.5 2.5,-2.5 h2.5 q1,0 2,1.5 l0.5,0.5 h5 q2,0 2,2 v8 q0,1.5 -1.5,1.5 h-11 q-1.5,0 -1.5,-1.5 z" fill="#e0b040" stroke="#a88028" stroke-width="1"/><path d="M316,531 q0,-1 1,-1 h12 q1,0 1,1 v6.5 q0,1 -1,1 h-12 q-1,0 -1,-1 z" fill="url(#fg)" stroke="#b08a30" stroke-width="0.8"/><path d="M305,548.5 h10" stroke="#999" stroke-width="1" stroke-dasharray="1,1"/><path d="M315.5,544 q0,-2.5 2.5,-2.5 h2.5 q1,0 2,1.5 l0.5,0.5 h5 q2,0 2,2 v8 q0,1.5 -1.5,1.5 h-11 q-1.5,0 -1.5,-1.5 z" fill="#e0b040" stroke="#a88028" stroke-width="1"/><path d="M316,546 q0,-1 1,-1 h12 q1,0 1,1 v6.5 q0,1 -1,1 h-12 q-1,0 -1,-1 z" fill="url(#fg)" stroke="#b08a30" stroke-width="0.8"/><path d="M305,564.5 h10" stroke="#999" stroke-width="1" stroke-dasharray="1,1"/><path d="M315.5,560 q0,-2.5 2.5,-2.5 h2.5 q1,0 2,1.5 l0.5,0.5 h5 q2,0 2,2 v8 q0,1.5 -1.5,1.5 h-11 q-1.5,0 -1.5,-1.5 z" fill="#e0b040" stroke="#a88028" stroke-width="1"/><path d="M316,562 q0,-1 1,-1 h12 q1,0 1,1 v6.5 q0,1 -1,1 h-12 q-1,0 -1,-1 z" fill="url(#fg)" stroke="#b08a30" stroke-width="0.8"/><path d="M304.5,306 V563.6" stroke="#999" stroke-width="1" stroke-dasharray="1,1"/></svg><svg width="1040" height="667" style="position:absolute;left:0;top:0"><rect x="283.5" y="594.5" width="11" height="11" fill="#fff" stroke="#8f8f8f"/><rect x="283.5" y="617.5" width="11" height="11" fill="#f4f8ff" stroke="#6a7a9a"/><path d="M285.5,622 l2.5,3 l4.5,-6" stroke="#1c3a8a" stroke-width="1.6" fill="none"/><rect x="359.5" y="617.5" width="11" height="11" fill="#f4f8ff" stroke="#6a7a9a"/><path d="M361.5,622 l2.5,3 l4.5,-6" stroke="#1c3a8a" stroke-width="1.6" fill="none"/></svg><div class="t " style="left:300px;top:593px;"><b>显示图片</b></div><div class="t " style="left:300px;top:616px;"><b>在使用中</b></div><div class="t " style="left:376px;top:616px;"><b>非使用中</b></div><div style="left:435px;top:292px;width:533px;height:342px;border:1px solid #a0a0a0;background:#fff"></div><div style="left:436px;top:293px;width:11px;height:323px;background:#f0f0f0"></div><div style="left:446px;top:293px;width:2px;height:323px;background:#000"></div><div style="left:448px;top:293px;width:502px;height:19px;background:linear-gradient(#ffffff,#f0f0f0)"></div><div style="left:885px;top:293px;width:65px;height:19px;background:linear-gradient(#e6f6fd 45%,#bde6fa 50%,#c0e8fa)"></div><div style="left:436px;top:312px;width:514px;height:2px;background:#000"></div><div class="t " style="left:449px;top:295px;"><b>产品代码</b></div><div class="t " style="left:538px;top:295px;"><b>产品名称</b></div><div class="t " style="left:659px;top:295px;"><b>产品规格</b></div><div class="t " style="left:764px;top:295px;"><b>类型</b></div><div class="t " style="left:834px;top:295px;"><b>品牌</b></div><div class="t " style="left:905px;top:295px;"><b>小类</b></div><div style="left:448px;top:314px;width:502px;height:18px;background:#c6cdeb;border-bottom:1px solid #6a9ad8;border-left:1px solid #6a9ad8;border-right:1px solid #6a9ad8;border-radius:0 0 2px 0"></div><div style="left:498px;top:293px;width:1px;height:323px;background:#d4d4d4"></div><div style="left:621px;top:293px;width:1px;height:323px;background:#d4d4d4"></div><div style="left:744px;top:293px;width:1px;height:323px;background:#d4d4d4"></div><div style="left:808px;top:293px;width:1px;height:323px;background:#d4d4d4"></div><div style="left:885px;top:293px;width:1px;height:323px;background:#d4d4d4"></div><div style="left:436px;top:312px;width:514px;height:2px;background:#000"></div><div style="left:448px;top:332px;width:502px;height:1px;background:#d0d0d0"></div><div style="left:436px;top:332px;width:10px;height:1px;background:#404040"></div><div style="left:448px;top:350px;width:502px;height:1px;background:#d0d0d0"></div><div style="left:436px;top:350px;width:10px;height:1px;background:#404040"></div><div style="left:448px;top:369px;width:502px;height:1px;background:#d0d0d0"></div><div style="left:436px;top:369px;width:10px;height:1px;background:#404040"></div><div style="left:448px;top:387px;width:502px;height:1px;background:#d0d0d0"></div><div style="left:436px;top:387px;width:10px;height:1px;background:#404040"></div><div style="left:448px;top:406px;width:502px;height:1px;background:#d0d0d0"></div><div style="left:436px;top:406px;width:10px;height:1px;background:#404040"></div><div style="left:448px;top:424px;width:502px;height:1px;background:#d0d0d0"></div><div style="left:436px;top:424px;width:10px;height:1px;background:#404040"></div><div style="left:448px;top:443px;width:502px;height:1px;background:#d0d0d0"></div><div style="left:436px;top:443px;width:10px;height:1px;background:#404040"></div><div style="left:448px;top:461px;width:502px;height:1px;background:#d0d0d0"></div><div style="left:436px;top:461px;width:10px;height:1px;background:#404040"></div><div style="left:448px;top:480px;width:502px;height:1px;background:#d0d0d0"></div><div style="left:436px;top:480px;width:10px;height:1px;background:#404040"></div><div style="left:448px;top:499px;width:502px;height:1px;background:#d0d0d0"></div><div style="left:436px;top:499px;width:10px;height:1px;background:#404040"></div><div style="left:448px;top:517px;width:502px;height:1px;background:#d0d0d0"></div><div style="left:436px;top:517px;width:10px;height:1px;background:#404040"></div><div style="left:448px;top:536px;width:502px;height:1px;background:#d0d0d0"></div><div style="left:436px;top:536px;width:10px;height:1px;background:#404040"></div><div style="left:448px;top:554px;width:502px;height:1px;background:#d0d0d0"></div><div style="left:436px;top:554px;width:10px;height:1px;background:#404040"></div><div style="left:448px;top:573px;width:502px;height:1px;background:#d0d0d0"></div><div style="left:436px;top:573px;width:10px;height:1px;background:#404040"></div><div style="left:448px;top:591px;width:502px;height:1px;background:#d0d0d0"></div><div style="left:436px;top:591px;width:10px;height:1px;background:#404040"></div><div style="left:448px;top:610px;width:502px;height:1px;background:#d0d0d0"></div><div style="left:436px;top:610px;width:10px;height:1px;background:#404040"></div><div class="t m" style="left:449px;top:316px;transform:scaleX(0.8)">000</div><div class="t " style="left:502px;top:316px;"><b>维修费</b></div><div class="t m" style="left:624px;top:316px;transform:scaleX(0.76)"></div><div class="t " style="left:746px;top:316px;"></div><div class="t " style="left:811px;top:316px;"></div><div class="t m" style="left:449px;top:335px;transform:scaleX(0.8)">0001</div><div class="t " style="left:502px;top:335px;"><b>华为手机</b></div><div class="t m" style="left:624px;top:335px;transform:scaleX(0.76)">M20</div><div class="t " style="left:746px;top:335px;"></div><div class="t " style="left:811px;top:335px;"></div><div class="t m" style="left:449px;top:353px;transform:scaleX(0.8)">0002</div><div class="t " style="left:502px;top:353px;"><b>华为手机</b></div><div class="t m" style="left:624px;top:353px;transform:scaleX(0.76)">M30</div><div class="t " style="left:746px;top:353px;"></div><div class="t " style="left:811px;top:353px;"></div><div class="t m" style="left:449px;top:372px;transform:scaleX(0.8)">01010001</div><div class="t " style="left:502px;top:372px;"><b>威力冰箱</b></div><div class="t m" style="left:624px;top:372px;transform:scaleX(0.76)">BCD-139C</div><div class="t " style="left:746px;top:372px;"><b>冰箱</b></div><div class="t " style="left:811px;top:372px;"><b>威力</b></div><div class="t m" style="left:449px;top:390px;transform:scaleX(0.8)">01010002</div><div class="t " style="left:502px;top:390px;"><b>威力冰箱</b></div><div class="t m" style="left:624px;top:390px;transform:scaleX(0.76)">BCD-188K</div><div class="t " style="left:746px;top:390px;"><b>冰箱</b></div><div class="t " style="left:811px;top:390px;"><b>威力</b></div><div class="t m" style="left:449px;top:409px;transform:scaleX(0.8)">01010003</div><div class="t " style="left:502px;top:409px;"><b>威力冰箱</b></div><div class="t m" style="left:624px;top:409px;transform:scaleX(0.76)">BCD-170K</div><div class="t " style="left:746px;top:409px;"><b>冰箱</b></div><div class="t " style="left:811px;top:409px;"><b>威力</b></div><div class="t m" style="left:449px;top:427px;transform:scaleX(0.8)">01010004</div><div class="t " style="left:502px;top:427px;"><b>威力冰箱</b></div><div class="t m" style="left:624px;top:427px;transform:scaleX(0.76)">BCD-156K</div><div class="t " style="left:746px;top:427px;"><b>冰箱</b></div><div class="t " style="left:811px;top:427px;"><b>威力</b></div><div class="t m" style="left:449px;top:446px;transform:scaleX(0.8)">01010005</div><div class="t " style="left:502px;top:446px;"><b>威力冰箱</b></div><div class="t m" style="left:624px;top:446px;transform:scaleX(0.76)">BCD-90</div><div class="t " style="left:746px;top:446px;"><b>冰箱</b></div><div class="t " style="left:811px;top:446px;"><b>威力</b></div><div class="t m" style="left:449px;top:464px;transform:scaleX(0.8)">01010006</div><div class="t " style="left:502px;top:464px;"><b>威力冰箱</b></div><div class="t m" style="left:624px;top:464px;transform:scaleX(0.76)">BCD-109C</div><div class="t " style="left:746px;top:464px;"><b>冰箱</b></div><div class="t " style="left:811px;top:464px;"><b>威力</b></div><div class="t m" style="left:449px;top:483px;transform:scaleX(0.8)">01010007</div><div class="t " style="left:502px;top:483px;"><b>威力冰箱</b></div><div class="t m" style="left:624px;top:483px;transform:scaleX(0.76)">BC-80A</div><div class="t " style="left:746px;top:483px;"><b>冰箱</b></div><div class="t " style="left:811px;top:483px;"><b>威力</b></div><div class="t m" style="left:449px;top:501px;transform:scaleX(0.8)">01010008</div><div class="t " style="left:502px;top:501px;"><b>万宝冰箱</b></div><div class="t m" style="left:624px;top:501px;transform:scaleX(0.76)">BCD-145W</div><div class="t " style="left:746px;top:501px;"><b>冰箱</b></div><div class="t " style="left:811px;top:501px;"><b>万宝</b></div><div class="t m" style="left:449px;top:520px;transform:scaleX(0.8)">01010009</div><div class="t " style="left:502px;top:520px;"><b>万宝冰箱</b></div><div class="t m" style="left:624px;top:520px;transform:scaleX(0.76)">BCD-92M</div><div class="t " style="left:746px;top:520px;"><b>冰箱</b></div><div class="t " style="left:811px;top:520px;"><b>万宝</b></div><div class="t m" style="left:449px;top:539px;transform:scaleX(0.8)">01010010</div><div class="t " style="left:502px;top:539px;"><b>美的冰箱</b></div><div class="t m" style="left:624px;top:539px;transform:scaleX(0.76)">BC-90N</div><div class="t " style="left:746px;top:539px;"><b>冰箱</b></div><div class="t " style="left:811px;top:539px;"><b>美的</b></div><div class="t m" style="left:449px;top:557px;transform:scaleX(0.8)">01010011</div><div class="t " style="left:502px;top:557px;"><b>美的冰箱</b></div><div class="t m" style="left:624px;top:557px;transform:scaleX(0.76)">BCD-286GPM<b>红西花纹</b></div><div class="t " style="left:746px;top:557px;"><b>冰箱</b></div><div class="t " style="left:811px;top:557px;"><b>美的</b></div><div class="t m" style="left:449px;top:576px;transform:scaleX(0.8)">01010012</div><div class="t " style="left:502px;top:576px;"><b>美的冰箱</b></div><div class="t m" style="left:624px;top:576px;transform:scaleX(0.76)">BCD-219TM</div><div class="t " style="left:746px;top:576px;"><b>冰箱</b></div><div class="t " style="left:811px;top:576px;"><b>美的</b></div><div class="t m" style="left:449px;top:594px;transform:scaleX(0.8)">01010013</div><div class="t " style="left:502px;top:594px;"><b>美的冰箱</b></div><div class="t m" style="left:624px;top:594px;transform:scaleX(0.76)">BC-98N</div><div class="t " style="left:746px;top:594px;"><b>冰箱</b></div><div class="t " style="left:811px;top:594px;"><b>美的</b></div><div class="t m" style="left:449px;top:613px;transform:scaleX(0.8)">01010014</div><div class="t " style="left:502px;top:613px;"><b>美的冰箱</b></div><div class="t m" style="left:624px;top:613px;transform:scaleX(0.76)"></div><div class="t " style="left:746px;top:613px;"><b>冰箱</b></div><div class="t " style="left:811px;top:613px;"><b>美的</b></div><div style="left:436px;top:616px;width:514px;height:16px;background:#f0f0f0"></div><svg width="1040" height="667" style="position:absolute;left:0;top:0"><polygon points="440,319 446,323 440,327" fill="#000"/></svg><div style="left:950px;top:293px;width:17px;height:323px;background:#f0f0f0"></div><div style="left:952px;top:310px;width:13px;height:15px;border:1px solid #a8a8a8;border-radius:2px;background:linear-gradient(90deg,#f8f8f8,#d8d8d8)"></div><svg width="1040" height="667" style="position:absolute;left:0;top:0"><polygon points="954,305 958,301 962,305" fill="#505050"/><polygon points="954,606 962,606 958,610" fill="#505050"/></svg><div style="left:436px;top:616px;width:514px;height:16px;background:#f0f0f0"></div><div style="left:455px;top:617px;width:21px;height:14px;border:1px solid #a8a8a8;border-radius:2px;background:linear-gradient(#fafafa,#dcdcdc)"></div><div style="left:950px;top:616px;width:17px;height:16px;background:#fff"></div><svg width="1040" height="667" style="position:absolute;left:0;top:0"><polygon points="442,624 446,620 446,628" fill="#606060"/><polygon points="942,620 946,624 942,628" fill="#606060"/><path d="M463.5,621 v6 M465.5,621 v6 M467.5,621 v6" stroke="#777"/></svg><div style="left:277px;top:636px;width:691px;height:17px;border:1px solid #a0a0a0;border-right:none;border-bottom-color:#fff;background:#f0f0f0"></div><div style="left:643px;top:637px;width:1px;height:15px;background:#a0a0a0"></div><div style="left:821px;top:637px;width:1px;height:15px;background:#a0a0a0"></div><div class="t " style="left:652px;top:638px;"><b>记录号</b>/<b>记录数</b>:[1/3992]</div><svg width="1040" height="667" style="position:absolute;left:0;top:0"><rect x="825.5" y="638.5" width="29" height="11" fill="#f8f080" stroke="#303030"/><path d="M826,642 h28 M840,639 v3" stroke="#303030"/><path d="M957,652 l11,-11 M961,652 l7,-7 M965,652 l3,-3" stroke="#909090" stroke-width="1.3"/></svg><div class="t " style="left:863px;top:638px;"><b>基本资料</b></div></body></html>
